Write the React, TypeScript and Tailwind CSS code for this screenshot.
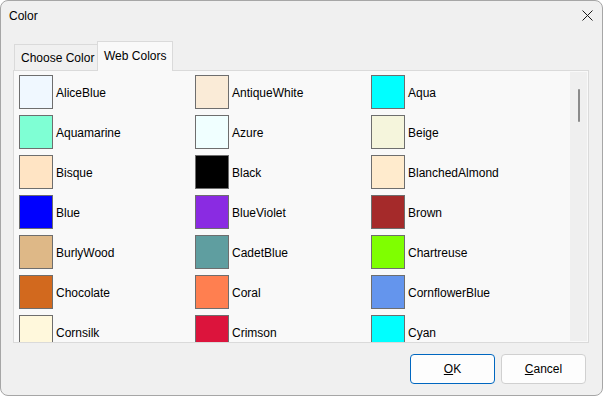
import React from "react";

const colors: [string, string][] = [
  ["AliceBlue", "#F0F8FF"],
  ["AntiqueWhite", "#FAEBD7"],
  ["Aqua", "#00FFFF"],
  ["Aquamarine", "#7FFFD4"],
  ["Azure", "#F0FFFF"],
  ["Beige", "#F5F5DC"],
  ["Bisque", "#FFE4C4"],
  ["Black", "#000000"],
  ["BlanchedAlmond", "#FFEBCD"],
  ["Blue", "#0000FF"],
  ["BlueViolet", "#8A2BE2"],
  ["Brown", "#A52A2A"],
  ["BurlyWood", "#DEB887"],
  ["CadetBlue", "#5F9EA0"],
  ["Chartreuse", "#7FFF00"],
  ["Chocolate", "#D2691E"],
  ["Coral", "#FF7F50"],
  ["CornflowerBlue", "#6495ED"],
  ["Cornsilk", "#FFF8DC"],
  ["Crimson", "#DC143C"],
  ["Cyan", "#00FFFF"],
];

export default function App() {
  return (
    <div
      className="w-[606px] h-[397px] bg-white text-[12px] text-black"
      style={{ fontFamily: '"Liberation Sans", Arial, sans-serif' }}
    >
      <div className="w-[603px] h-[396px] border border-[#a6a6a6] rounded-[8px] bg-[#f0f0f0] flex flex-col overflow-hidden">
        {/* title bar */}
        <div className="h-[30px] flex items-center justify-between pl-[8px] pr-[9px] shrink-0">
          <span className="leading-none">Color</span>
          <svg width="11" height="11" viewBox="0 0 11 11" className="mt-[-1px]">
            <path d="M0.5 0.5 L10.5 10.5 M10.5 0.5 L0.5 10.5" stroke="#1a1a1a" strokeWidth="1" fill="none" />
          </svg>
        </div>
        {/* tabs */}
        <div className="pl-[12px] pt-[10px] flex items-end shrink-0">
          <div className="w-[84px] h-[26px] border border-b-0 border-[#dadada] bg-[#f0f0f0] flex items-center pl-[6px] pt-[1px] ml-[1px]">
            Choose Color
          </div>
          <div className="relative z-10 -mb-px w-[76px] h-[30px] border border-b-0 border-[#dadada] bg-[#f9f9f9] flex items-center pl-[6px] pb-[1px] -ml-px">
            Web Colors
          </div>
        </div>
        {/* panel */}
        <div className="ml-[12px] w-[576px] h-[273px] border border-[#dadada] bg-[#f9f9f9] flex shrink-0 overflow-hidden">
          <div className="flex-1 overflow-hidden pl-[5px] pt-[4px]">
            <div className="grid grid-cols-[176px_176px_176px] gap-y-[6px]">
              {colors.map(([name, hex]) => (
                <div key={name} className="flex items-center h-[34px]">
                  <div
                    className="w-[34px] h-[34px] border border-[#6e6e6e] shrink-0"
                    style={{ backgroundColor: hex }}
                  />
                  <span className="ml-[3px] mt-[2px] leading-none">{name}</span>
                </div>
              ))}
            </div>
          </div>
          <div className="w-[17px] mr-[1px] mt-[1px] mb-[1px] bg-[#efefef] flex justify-center pt-[17px]">
            <div className="w-[2px] h-[33px] bg-[#8a8a8a] rounded-full" />
          </div>
        </div>
        {/* buttons */}
        <div className="flex justify-end gap-[6px] pr-[16px] pt-[11px]">
          <button className="w-[85px] h-[30px] rounded-[4px] border border-[#0067c0] bg-[#fdfdfd] flex items-center justify-center">
            <span>
              <u>O</u>K
            </span>
          </button>
          <button className="w-[85px] h-[30px] rounded-[4px] border border-[#d0d0d0] bg-[#fdfdfd] flex items-center justify-center">
            <span>
              <u>C</u>ancel
            </span>
          </button>
        </div>
      </div>
    </div>
  );
}
